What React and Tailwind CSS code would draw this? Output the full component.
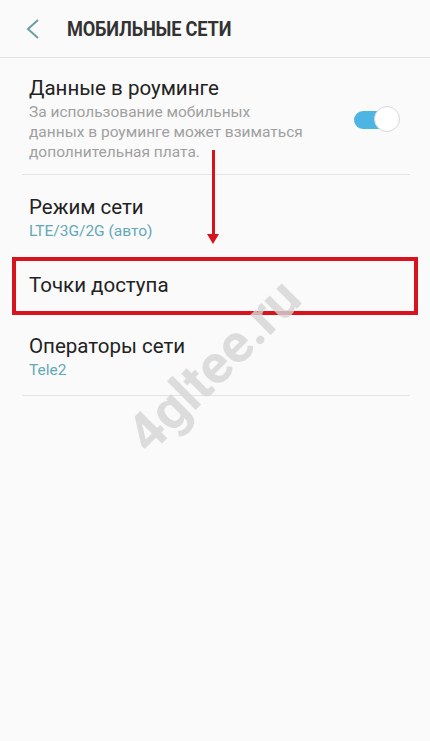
export default function App() {
  return (
    <div className="relative min-h-[741px] w-[430px] overflow-hidden bg-[#fafafa] font-['Roboto',sans-serif]">
      <header className="flex h-[58px] items-center border-b border-[#e2e2e2]">
        <svg className="ml-[26px]" width="14" height="20" viewBox="0 0 14 20">
          <polyline points="12,1 2,10 12,19" fill="none" stroke="#6a9fa3" strokeWidth="2" />
        </svg>
        <h1 className="ml-[27px] origin-left scale-x-[0.91] whitespace-nowrap text-[20px] font-bold tracking-[-0.2px] text-[#333]">
          МОБИЛЬНЫЕ СЕТИ
        </h1>
      </header>

      <div className="ml-[22px] mr-[20px]">
        <div className="flex items-center border-b border-[#e4e4e4] pb-[12px] pl-[7px] pt-[18px]">
          <div className="flex-1">
            <div className="text-[20.5px] leading-[24px] text-[#222]">Данные в роуминге</div>
            <p className="mt-[2px] w-[280px] text-[15.5px] leading-[20px] text-[#a0a0a0]">
              За использование мобильных данных в роуминге может взиматься дополнительная плата.
            </p>
          </div>
          <Toggle />
        </div>

        <Item title="Режим сети" sub="LTE/3G/2G (авто)" className="h-[74px] pt-[20px]" />
        <div className="flex h-[72px] items-center pl-[7px]">
          <div className="text-[20.5px] leading-[24px] text-[#222]">Точки доступа</div>
        </div>
        <Item title="Операторы сети" sub="Tele2" className="h-[75px] border-b border-[#e4e4e4] pt-[13px]" />
      </div>

      {/* annotation overlays */}
      <div className="absolute left-[12px] top-[257px] h-[58px] w-[406px] border-[4px] border-[#d7141d]" />
      <div className="absolute left-[212px] top-[150px] h-[86px] w-[3px] bg-[#d7141d]" />
      <div className="absolute left-[207px] top-[234px] h-0 w-0 border-x-[6.5px] border-t-[10px] border-x-transparent border-t-[#d7141d]" />

      <div className="pointer-events-none absolute left-[214px] top-[366px] -translate-x-1/2 -translate-y-1/2 -rotate-45 whitespace-nowrap text-[54px] font-bold leading-none text-[#d4d4d4]/80">
        4gltee.ru
      </div>
    </div>
  );
}

function Item({ title, sub, className }) {
  return (
    <div className={`pl-[7px] ${className}`}>
      <div className="text-[20.5px] leading-[24px] text-[#222]">{title}</div>
      <div className="mt-[2px] text-[15.5px] leading-[20px] text-[#62a8b8]">{sub}</div>
    </div>
  );
}

function Toggle() {
  return (
    <div className="relative mr-[10px] h-[26px] w-[46px]">
      <div className="absolute left-0 top-[5px] h-[18px] w-[34px] rounded-full bg-[#4db4e4]" />
      <div className="absolute right-0 top-0 h-[26px] w-[26px] rounded-full border border-[#d8d8d8] bg-white" />
    </div>
  );
}
